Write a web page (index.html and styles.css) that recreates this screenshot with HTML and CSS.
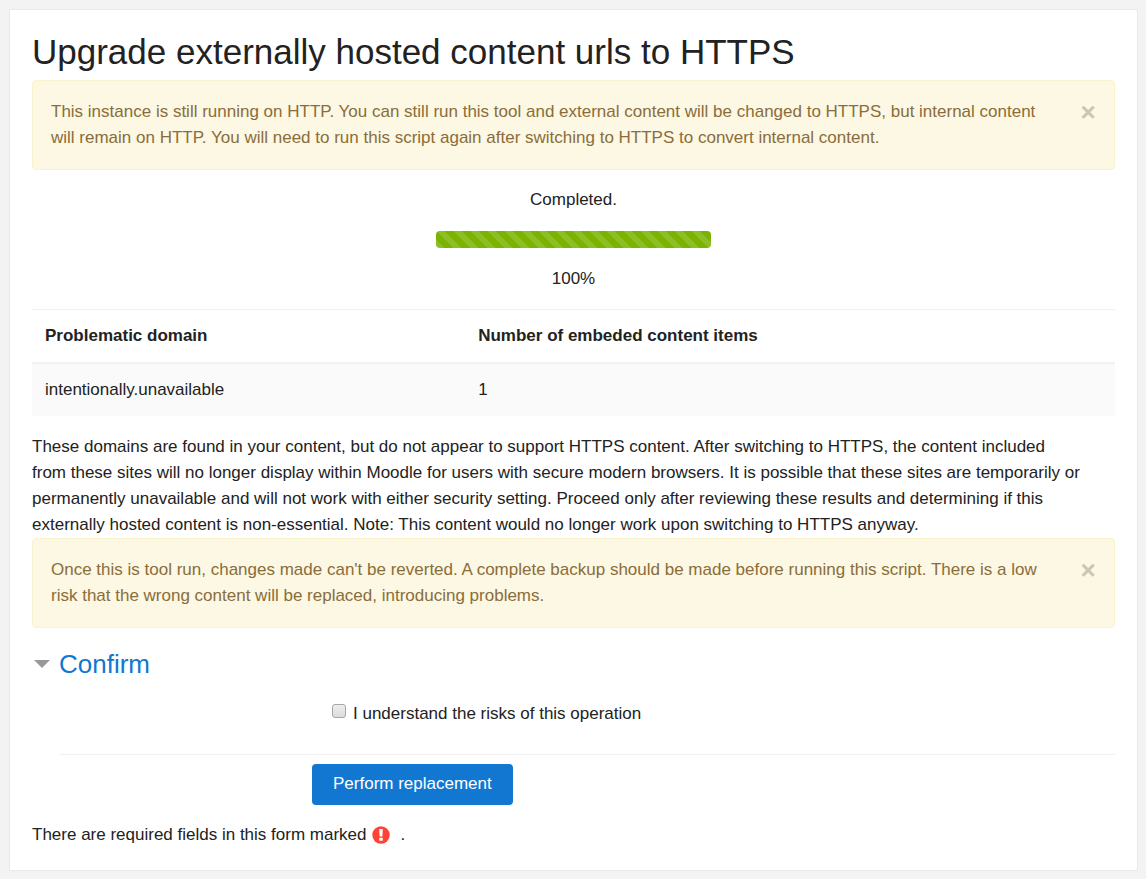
FILE: index.html
```
<!DOCTYPE html>
<html lang="en">
<head>
	<meta charset="utf-8">
	<title>Upgrade externally hosted content urls to HTTPS</title>
	<link rel="stylesheet" href="styles.css">
</head>
<body>
	<main class="card">
		<h1>Upgrade externally hosted content urls to HTTPS</h1>

		<div class="alert" role="alert">
			<p>This instance is still running on HTTP. You can still run this tool and external content will be changed to HTTPS, but internal content<br>
			will remain on HTTP. You will need to run this script again after switching to HTTPS to convert internal content.</p>
			<button type="button" class="close" aria-label="Dismiss">&times;</button>
		</div>

		<div class="progress">
			<p>Completed.</p>
			<div class="bar" role="progressbar" aria-valuenow="100" aria-valuemin="0" aria-valuemax="100" aria-label="Progress"></div>
			<p>100%</p>
		</div>

		<table class="domains">
			<thead>
				<tr>
					<th class="domain">Problematic domain</th>
					<th>Number of embeded content items</th>
				</tr>
			</thead>
			<tbody>
				<tr>
					<td>intentionally.unavailable</td>
					<td>1</td>
				</tr>
			</tbody>
		</table>

		<p>These domains are found in your content, but do not appear to support HTTPS content. After switching to HTTPS, the content included<br>
		from these sites will no longer display within Moodle for users with secure modern browsers. It is possible that these sites are temporarily or<br>
		permanently unavailable and will not work with either security setting. Proceed only after reviewing these results and determining if this<br>
		externally hosted content is non-essential. Note: This content would no longer work upon switching to HTTPS anyway.</p>

		<div class="alert" role="alert">
			<p>Once this is tool run, changes made can't be reverted. A complete backup should be made before running this script. There is a low<br>
			risk that the wrong content will be replaced, introducing problems.</p>
			<button type="button" class="close" aria-label="Dismiss">&times;</button>
		</div>

		<form>
			<h2>
				<a href="#confirm">
					<svg class="arrow" width="16" height="8" viewBox="0 0 16 8" aria-hidden="true"><path d="M0 0h16L8 8z" fill="#999"/></svg>
					Confirm
				</a>
			</h2>
			<div class="fields" id="confirm">
				<div class="check">
					<input type="checkbox" id="sure">
					<label for="sure">I understand the risks of this operation</label>
				</div>
			</div>
			<div class="actions">
				<button type="submit" class="btn">Perform replacement</button>
			</div>
			<div class="required">
				There are required fields in this form marked
				<svg class="req" width="18" height="18" viewBox="0 0 18 18" role="img" aria-label="Required field">
					<circle cx="9" cy="9" r="8.7" fill="#ff4136"/>
					<path d="M7.2 3h3.6l-.4 7.4H7.6zM7.3 11.7h3.4v3.1H7.3z" fill="#fff"/>
				</svg>
				<span>.</span>
			</div>
		</form>
	</main>
</body>
</html>
```
FILE: styles.css
```
body
{
	margin: 0;
	padding: 9px 8px 8px 9px;
	background: #f3f3f3;
	color: #222;
	font: 17px/26px "Liberation Sans", Arial, sans-serif;
}

.card
{
	padding: 22px;
	background: #fff;
	border: 1px solid #e9e9e9;
}

h1, h2, p
{
	margin: 0;
	font-weight: normal;
}

h1
{
	margin-bottom: 8px;
	font-size: 35px;
	line-height: 40px;
}

.alert
{
	display: flex;
	justify-content: space-between;
	align-items: flex-start;
	gap: 10px;
	padding: 18px;
	background: #fcf8e3;
	border: 1px solid #faf2cc;
	border-radius: 4px;
	color: #8a6d3b;
}

.close
{
	padding: 0;
	width: 16px;
	background: none;
	border: 0;
	color: #c9c6b5;
	font: bold 26px/26px "Liberation Sans", Arial, sans-serif;
	cursor: pointer;
}

.progress
{
	display: flex;
	flex-direction: column;
	align-items: center;
	gap: 18px;
	padding: 17px 0;
}

.bar
{
	width: 275px;
	height: 17px;
	border-radius: 4px;
	background: #7ab300 linear-gradient(45deg, rgba(255,255,255,.15) 25%, transparent 25%, transparent 50%, rgba(255,255,255,.15) 50%, rgba(255,255,255,.15) 75%, transparent 75%);
	background-size: 17px 17px;
}

.domains
{
	width: 100%;
	margin-bottom: 18px;
	border-collapse: separate;
	border-spacing: 0;
}

.domains th, .domains td
{
	padding: 13px;
	text-align: left;
}

.domains th
{
	border-top: 1px solid #f1f1f1;
	border-bottom: 2px solid #f1f1f1;
}

.domains td
{
	background: #fafafa;
}

.domain
{
	width: 40%;
}

h2
{
	margin-top: 14px;
	font-size: 26px;
	line-height: 34px;
}

h2 a
{
	display: inline-flex;
	align-items: center;
	gap: 9px;
	padding-left: 2px;
	color: #1177d1;
	text-decoration: none;
}

.fields
{
	margin-left: 27px;
	padding: 20px 0 27px 273px;
	border-bottom: 1px solid #f1f1f1;
}

.check
{
	display: flex;
	gap: 7px;
}

.check input
{
	appearance: none;
	width: 14px;
	height: 14px;
	margin: 3px 0 0;
	border: 1px solid #a6a6a6;
	border-radius: 3px;
	background: linear-gradient(#eee, #dcdcdc);
}

.check input:checked
{
	background: #1177d1;
}

.actions
{
	padding: 9px 0 17px 280px;
}

.btn
{
	padding: 7px 21px 8px;
	background: #1177d1;
	border: 0;
	border-radius: 4px;
	color: #fff;
	font: inherit;
	cursor: pointer;
}

.required
{
	display: flex;
	align-items: center;
	gap: 6px;
}

.required span
{
	margin-left: 4px;
}
```
